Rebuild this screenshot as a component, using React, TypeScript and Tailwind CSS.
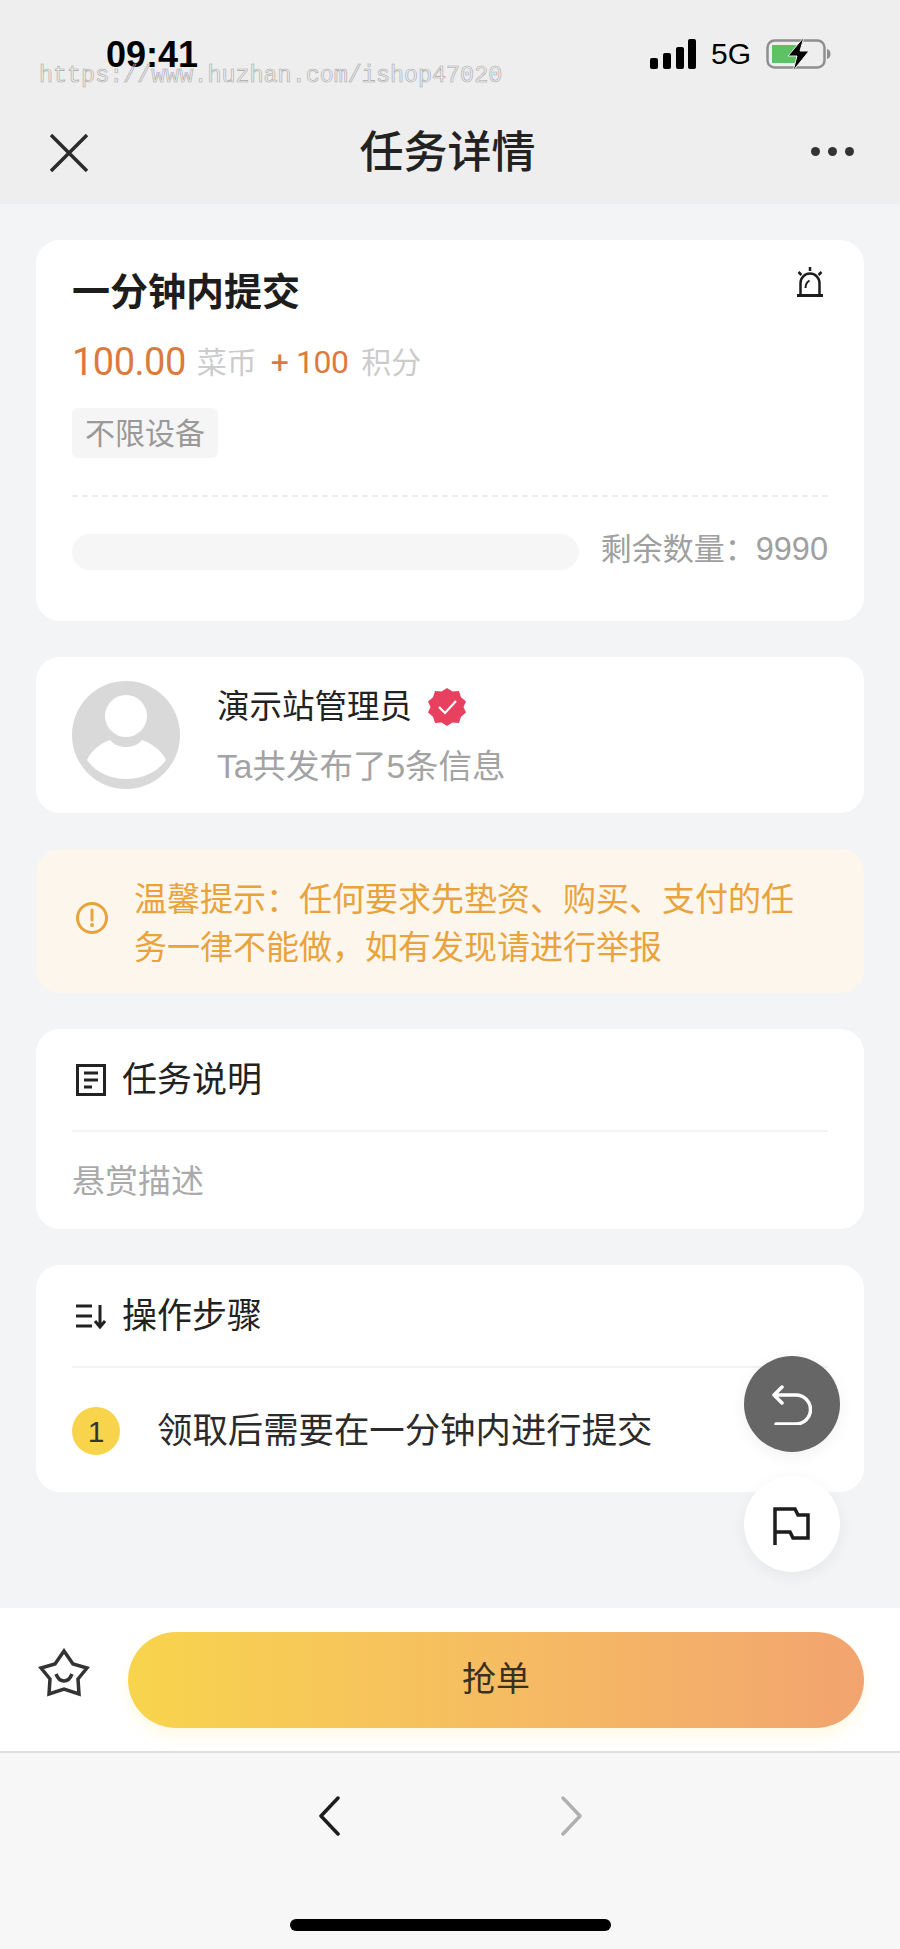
const cjk = "font-['Liberation_Sans','Noto_Sans_CJK_SC',sans-serif]";

function StatusBar() {
  return (
    <div className="flex h-[86px] items-start justify-between pl-[106px] pr-[68px] pt-[35px]">
      <span className="text-[36px] leading-[40px] font-bold text-black">09:41</span>
      <div className="flex items-center pt-[1px]">
        <svg width="46" height="30" viewBox="0 0 46 30" className="mr-[15px]">
          <rect x="0" y="19" width="8" height="11" rx="2" fill="#000" />
          <rect x="13" y="14" width="8" height="16" rx="2" fill="#000" />
          <rect x="26" y="8" width="8" height="22" rx="2" fill="#000" />
          <rect x="38" y="0" width="8" height="30" rx="2" fill="#000" />
        </svg>
        <span className="mr-[15px] text-[30px] leading-[32px] text-black">5G</span>
        <svg width="66" height="36" viewBox="0 0 66 36">
          <rect x="1.500" y="4.500" width="57" height="27" rx="7" fill="none" stroke="#8f8f8f" strokeWidth="2.500" />
          <path d="M6 9h24v18H6z" fill="#5cc264" />
          <path d="M61 13c2.500.5 3.500 2.500 3.500 5s-1 4.500-3.500 5z" fill="#8f8f8f" />
          <path d="M38 1 22 20h9l-4 15 16-20h-9l4-14z" fill="#000" stroke="#eeeeee" strokeWidth="1" />
        </svg>
      </div>
    </div>
  );
}

function Header() {
  return (
    <div className="relative h-[204px] shrink-0 bg-[#eeeeee]">
      <StatusBar />
      <span className="absolute left-[39px] top-[62px] font-['Liberation_Mono',monospace] text-[23.400px] leading-[28px] text-transparent [-webkit-text-stroke:0.6px_#a8a8a8]">
        https://www.huzhan.com/ishop47020
      </span>
      <div className="flex h-[118px] items-center justify-between pl-[50px] pr-[46px] pt-[16px]">
        <svg width="38" height="38" viewBox="0 0 38 38">
          <path d="M1 1l36 36M37 1 1 37" stroke="#2b2b2b" strokeWidth="3.500" />
        </svg>
        <span className="pr-[4px] text-[44px] leading-[50px] font-medium text-[#222222]">任务详情</span>
        <div className="flex -translate-y-[2px] gap-[8px]">
          <span className="h-[9px] w-[9px] rounded-full bg-[#333333]" />
          <span className="h-[9px] w-[9px] rounded-full bg-[#333333]" />
          <span className="h-[9px] w-[9px] rounded-full bg-[#333333]" />
        </div>
      </div>
    </div>
  );
}

function TaskCard() {
  return (
    <div className="relative h-[381px] rounded-[24px] bg-white px-[36px] pt-[29px]">
      <svg width="28" height="32" viewBox="0 0 28 32" className="absolute right-[40px] top-[26px]">
        <path d="M4.500 29V17a9.500 9.500 0 0 1 19 0V29" fill="none" stroke="#1c1c1c" strokeWidth="2.500" />
        <path d="M1 29.500h26" stroke="#1c1c1c" strokeWidth="3" />
        <path d="M14 1v4M2.500 6l3 3M25.500 6l-3 3" stroke="#1c1c1c" strokeWidth="2.500" />
        <path d="M9.500 22c0-4 1.500-6 4-7.500" fill="none" stroke="#1c1c1c" strokeWidth="2" />
      </svg>
      <div className="text-[38px] leading-[46px] font-bold text-[#1d1d1d]">一分钟内提交</div>
      <div className="mt-[24px] flex h-[46px] items-center">
        <span className="font-['Roboto',sans-serif] text-[38px] tracking-[-0.5px] text-[#dc7a3e]">100.00</span>
        <span className="ml-[11px] text-[30px] text-[#cccccc]">菜币</span>
        <span className="ml-[14px] font-['Roboto',sans-serif] text-[32px] tracking-[-0.5px] text-[#dc7a3e]">+ 100</span>
        <span className="ml-[13px] text-[30px] text-[#cccccc]">积分</span>
      </div>
      <div className="mt-[23px] flex h-[50px] w-[146px] items-center justify-center rounded-[6px] bg-[#f5f5f5] text-[30px] text-[#999999]">
        不限设备
      </div>
      <div className="mt-[37px] border-t-2 border-dashed border-[#ececec]" />
      <div className="mt-[36px] flex items-center justify-between">
        <div className="h-[36px] w-[507px] rounded-full bg-[#f6f6f6]" />
        <span className="-translate-y-[2px] text-[31px] leading-[36px] text-[#a0a0a0]">
          剩余数量：<span className="text-[32.500px]">9990</span>
        </span>
      </div>
    </div>
  );
}

function PublisherCard() {
  return (
    <div className="flex h-[156px] items-center rounded-[24px] bg-white px-[36px]">
      <svg width="108" height="108" viewBox="0 0 108 108" className="shrink-0">
        <circle cx="54" cy="54" r="54" fill="#d9d9d9" />
        <circle cx="54" cy="35" r="21" fill="#fff" />
        <path d="M15 79c5-11 15-17 23-20 4 5 10 7 16 7s12-2 16-7c8 3 19 9 24 20-8 12-24 19-40 19s-31-7-39-19z" fill="#fff" />
      </svg>
      <div className="ml-[37px] flex flex-col gap-[16px] pt-[4px]">
        <div className="flex h-[44px] items-center">
          <span className="text-[32.500px] leading-[44px] text-[#222222]">演示站管理员</span>
          <svg width="38" height="38" viewBox="0 0 38 38" className="ml-[16px]">
            <path
              d="M19 0l5.500 3.500 6.500-.5 2 6.200 5 4.300-2.500 5.500 2.500 5.500-5 4.300-2 6.200-6.500-.5L19 38l-5.500-3.500-6.500.5-2-6.200-5-4.300 2.500-5.500L0 13.500l5-4.300L7 3l6.500.5z"
              fill="#e8415f"
            />
            <path d="M11 19l6 6 11-12" fill="none" stroke="#fff" strokeWidth="2.200" />
          </svg>
        </div>
        <span className="text-[33.500px] leading-[44px] text-[#a3a3a3]">Ta共发布了5条信息</span>
      </div>
    </div>
  );
}

function NoticeCard() {
  return (
    <div className="flex h-[144px] items-center rounded-[24px] bg-[#fdf6ec] pl-[40px]">
      <svg width="32" height="32" viewBox="0 0 32 32" className="shrink-0 -translate-y-[3px]">
        <circle cx="16" cy="16" r="14.500" fill="none" stroke="#e8a33d" strokeWidth="3" />
        <path d="M16 8v10" stroke="#e8a33d" strokeWidth="3" strokeLinecap="round" />
        <circle cx="16" cy="23" r="2" fill="#e8a33d" />
      </svg>
      <p className="ml-[26px] w-[665px] pt-[5px] text-[33px] leading-[48px] text-[#e8a33d]">
        温馨提示：任何要求先垫资、购买、支付的任务一律不能做，如有发现请进行举报
      </p>
    </div>
  );
}

function SectionTitle({ icon, title }: { icon: React.ReactNode; title: string }) {
  return (
    <div className="flex h-[103px] items-center border-b-2 border-[#f3f3f3] pl-[4px]">
      <div className="flex w-[46px] items-center">{icon}</div>
      <span className="text-[35px] leading-[44px] text-[#222222]">{title}</span>
    </div>
  );
}

function DescCard() {
  return (
    <div className="h-[200px] rounded-[24px] bg-white px-[36px]">
      <SectionTitle
        title="任务说明"
        icon={
          <svg width="30" height="32" viewBox="0 0 30 32">
            <rect x="1.500" y="1.500" width="27" height="29" fill="none" stroke="#222" strokeWidth="3" />
            <path d="M8 9h14M8 16h14M8 23h8" stroke="#222" strokeWidth="3" />
          </svg>
        }
      />
      <div className="pt-[28px] text-[33px] leading-[44px] text-[#aaaaaa]">悬赏描述</div>
    </div>
  );
}

function StepsCard() {
  return (
    <div className="h-[227px] rounded-[24px] bg-white px-[36px]">
      <SectionTitle
        title="操作步骤"
        icon={
          <svg width="30" height="26" viewBox="0 0 30 26">
            <path d="M0 3h16M0 13h16M0 23h16" stroke="#222" strokeWidth="3" />
            <path d="M24 2v21M19 18l5 6 5-6" fill="none" stroke="#222" strokeWidth="3" />
          </svg>
        }
      />
      <div className="mt-[39px] flex items-center">
        <span className="flex h-[48px] w-[48px] items-center justify-center rounded-full bg-[#f8d44c] text-[30px] text-[#333333]">
          1
        </span>
        <span className="ml-[37px] text-[35.400px] leading-[48px] text-[#2b2b2b]">领取后需要在一分钟内进行提交</span>
      </div>
    </div>
  );
}

function FloatButtons() {
  return (
    <div className="absolute right-[60px] top-[1356px] flex flex-col gap-[24px]">
      <div className="flex h-[96px] w-[96px] items-center justify-center rounded-full bg-[#666666] shadow-[0_4px_16px_rgba(0,0,0,0.06)]">
        <svg width="40" height="42" viewBox="0 0 40 42">
          <path
            d="M10 4 2 12l8 8M2 12h22a14.500 14.500 0 0 1 0 29H4"
            fill="none"
            stroke="#fff"
            strokeWidth="3.500"
            strokeLinecap="round"
            strokeLinejoin="round"
          />
        </svg>
      </div>
      <div className="flex h-[96px] w-[96px] items-center justify-center rounded-full bg-white shadow-[0_4px_16px_rgba(0,0,0,0.06)]">
        <svg width="38" height="44" viewBox="0 0 38 44">
          <path d="M2 43V7h20l3 6h10v23H20l-3-6H2" fill="none" stroke="#1d1d1d" strokeWidth="3.500" />
        </svg>
      </div>
    </div>
  );
}

function ActionBar() {
  return (
    <div className="flex h-[145px] shrink-0 items-center border-b-2 border-[#dfdfdf] bg-white pl-[38px] pr-[36px]">
      <svg width="52" height="52" viewBox="0 0 52 52" className="shrink-0 -translate-y-[6px]">
        <path
          d="M26 3l9 13 14 4-9 11 1 15-15-5-15 5 1-15-9-11 14-4z"
          fill="none"
          stroke="#333"
          strokeWidth="3.500"
        />
        <path d="M18 26c2 5 5 7 8 7s6-2 8-7" fill="none" stroke="#333" strokeWidth="3.500" />
      </svg>
      <div className="ml-[38px] flex h-[96px] flex-1 items-center justify-center rounded-full bg-gradient-to-r from-[#f8d44c] to-[#f2a46f] text-[34px] text-[#3a3020] shadow-[0_8px_16px_rgba(248,212,76,0.15)]">
        抢单
      </div>
    </div>
  );
}

function BrowserBar() {
  return (
    <div className="flex h-[196px] shrink-0 flex-col items-center bg-[#f7f7f7]">
      <div className="mt-[43px] flex w-[265px] justify-between">
        <svg width="22" height="40" viewBox="0 0 22 40">
          <path d="M20 2 3 20l17 18" fill="none" stroke="#1d1d1d" strokeWidth="3.500" strokeLinecap="round" strokeLinejoin="round" />
        </svg>
        <svg width="22" height="40" viewBox="0 0 22 40">
          <path d="M2 2l17 18L2 38" fill="none" stroke="#b0b0b0" strokeWidth="3.500" strokeLinecap="round" strokeLinejoin="round" />
        </svg>
      </div>
      <div className="mt-[83px] h-[12px] w-[321px] rounded-full bg-black" />
    </div>
  );
}

export default function App() {
  return (
    <div className={`relative flex h-[1949px] w-[900px] flex-col overflow-hidden bg-[#f3f4f6] ${cjk}`}>
      <Header />
      <div className="flex flex-1 flex-col gap-[36px] px-[36px] pt-[36px]">
        <TaskCard />
        <PublisherCard />
        <NoticeCard />
        <DescCard />
        <StepsCard />
      </div>
      <FloatButtons />
      <ActionBar />
      <BrowserBar />
    </div>
  );
}
